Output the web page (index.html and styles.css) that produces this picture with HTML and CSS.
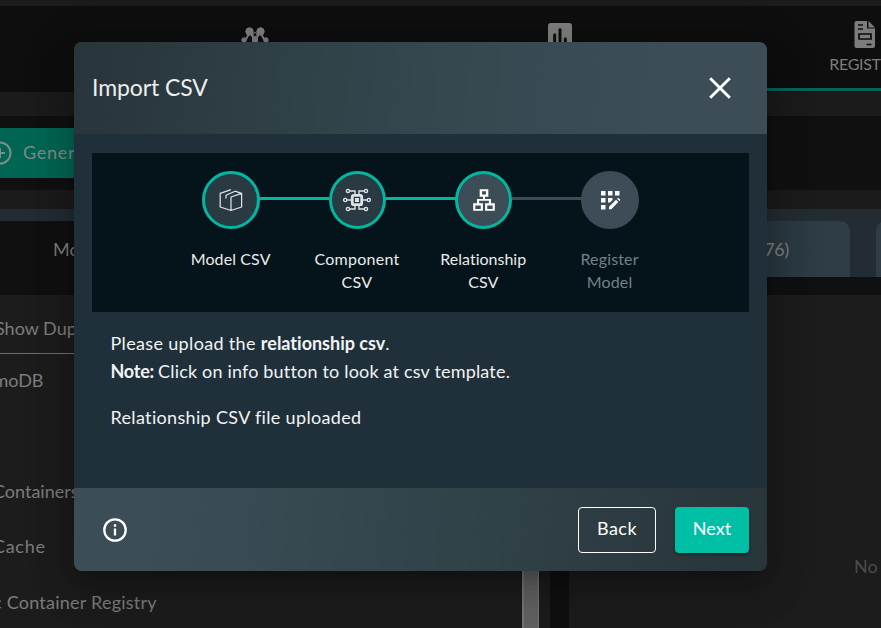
FILE: index.html
```html
<!DOCTYPE html>
<html lang="en">
<head>
<meta charset="utf-8">
<title>Import CSV</title>
<link rel="stylesheet" href="styles.css">
</head>
<body>
<div class="page">
  <nav class="nav">
    <div class="nav-item">
      <svg width="28" height="28" viewBox="0 0 28 28" fill="#7c7c7c" stroke="#7c7c7c"><path d="M9 5 14 8l5-3M9 5 4 14M19 5l5 9M9 5l5 9 5-9" fill="none" stroke-width="2"/><circle cx="8.500" cy="4.500" r="3.700"/><circle cx="19.500" cy="4.500" r="3.700"/><circle cx="14" cy="7.500" r="2" fill="#0d0d0d"/><circle cx="3" cy="13" r="2.200"/><circle cx="14" cy="13" r="2.700"/><circle cx="25" cy="13" r="2.200"/></svg>
    </div>
    <div class="nav-item">
      <svg width="32" height="32" viewBox="0 0 24 24" fill="#7c7c7c"><path d="M19 3H5a2 2 0 0 0-2 2v14c0 1.100.9 2 2 2h14a2 2 0 0 0 2-2V5a2 2 0 0 0-2-2z"/><path d="M8 12v5M12 8v9M16 15v2" stroke="#0d0d0d" stroke-width="2.200" stroke-linecap="round"/></svg>
    </div>
    <div class="nav-item active">
      <svg width="28" height="28" viewBox="0 0 28 28"><path d="M5.500 0H16v7.500h8V25a2 2 0 0 1-2 2H5.500a2 2 0 0 1-2-2V2a2 2 0 0 1 2-2z" fill="#7c7c7c"/><path d="M17.500 0 24 6.500h-6.500z" fill="#7c7c7c"/><path d="M7 4h5M7 8h5M15.500 23.500h5" stroke="#0d0d0d" stroke-width="1.700"/><path d="M8 13h12v5H8z" fill="none" stroke="#0d0d0d" stroke-width="1.700"/></svg>
      <span>REGISTRY</span>
    </div>
  </nav>
  <div class="toolbar">
    <div class="generate">
      <svg width="24" height="24" viewBox="0 0 24 24" fill="none" stroke="#7f8b87" stroke-width="2"><circle cx="12" cy="12" r="10.500"/><path d="M12 7v10M7 12h10"/></svg>
      <span>Generate</span>
    </div>
  </div>
  <div class="tabs">
    <div class="tab current">Models</div>
    <div class="tab wide">(7276)</div>
    <div class="tab next"></div>
  </div>
  <div class="panels">
    <div class="list">
      <div class="search">Show Duplicates</div>
      <div class="row"><span class="r1">amoDB</span></div>
      <div class="row"></div>
      <div class="row"><span class="r2">Containers</span></div>
      <div class="row"><span class="r3">Cache</span></div>
      <div class="row"><span class="r4">c Container Registry</span></div>
      <div class="scrollbar"></div>
    </div>
    <div class="detail">No model</div>
  </div>
</div>

<div class="modal">
  <header class="modal-head">
    <h1>Import CSV</h1>
    <svg width="22" height="22" viewBox="0 0 22 22" stroke="#fff" stroke-width="2.900"><path d="M1.200 1.200l19.600 19.600M20.800 1.200 1.200 20.800"/></svg>
  </header>
  <main class="modal-body">
    <div class="stepper">
      <div class="step done">
        <div class="disc"><svg width="28" height="28" viewBox="0 0 28 28" fill="none" stroke="#dfe3e5" stroke-width="1.250" stroke-linejoin="round"><path d="M14 3.600 3.200 7.300V21L14 24.500 24.600 21V7.300L18 5.200M24.600 7.300 14 11V24.500M9 12.500V9.300L18 5.200"/></svg></div>
        <p class="w1">Model CSV</p>
      </div>
      <div class="step done">
        <div class="disc"><svg width="28" height="28" viewBox="0 0 28 28" fill="none" stroke="#dfe3e5" stroke-width="1.400"><rect x="9.300" y="9.300" width="9.400" height="9.400" rx="1.500" stroke-width="2.800"/><rect x="12" y="12" width="4" height="4" fill="#dfe3e5" stroke="none"/><path d="M12 8V5H6.500M16 8V5h5.500M12 20v3H6.500M16 20v3h5.500M8 14H3.500M20 14h4.500"/><g fill="#2a3b44"><circle cx="5" cy="5" r="1.600"/><circle cx="23" cy="5" r="1.600"/><circle cx="5" cy="23" r="1.600"/><circle cx="23" cy="23" r="1.600"/><circle cx="2.200" cy="14" r="1.600"/><circle cx="25.800" cy="14" r="1.600"/></g></svg></div>
        <p class="w2">Component<br><span>CSV</span></p>
      </div>
      <div class="step current-step">
        <div class="disc"><svg width="26" height="26" viewBox="0 0 24 24" fill="#fff"><path d="M22 22h-9v-7h3.500v-2.200h-9V15H11v7H2v-7h3.500v-4h5.600V9H8V2h8v7h-3.100v2h5.600v4H22zM10.200 4v3h3.600V4zM4 17v3.200h5V17zM15 17v3.200h5V17z" fill-rule="evenodd"/></svg></div>
        <p class="w3">Relationship<br><span>CSV</span></p>
      </div>
      <div class="step pending">
        <div class="disc"><svg width="26" height="26" viewBox="0 0 26 26" fill="#fff"><path d="M4 4h4.500v4.500H4zM11 4h4.500v4.500H11zM18 4h4.500v4.500H18zM4 11h4.500v4.500H4zM11 11h4.500v2L13 15.500h-2zM4 18h4.500v4.500H4zM12 19.700l7-7 2.300 2.300-7 7.300H12zM20 11.700l1-1 2.500 2.300-1.200 1.100z"/></svg></div>
        <p class="w4">Register<br><span>Model</span></p>
      </div>
    </div>
    <div class="copy">
      <p><span class="c1">Please upload the </span><b class="c2">relationship csv</b>.</p>
      <p><b class="c3">Note: </b><span class="c4">Click on info button to look at csv template.</span></p>
      <p class="status">Relationship CSV file uploaded</p>
    </div>
  </main>
  <footer class="modal-foot">
    <svg width="26" height="26" viewBox="0 0 26 26" fill="none" stroke="#fff" stroke-width="2.300"><circle cx="13" cy="13" r="10.700"/><path d="M13 11.500v7M13 7.300v2.400"/></svg>
    <div class="actions">
      <button class="back">Back</button>
      <button class="go">Next</button>
    </div>
  </footer>
</div>
</body>
</html>
```
FILE: styles.css
```css
* { box-sizing: border-box; }
html, body { margin: 0; height: 628px; overflow: hidden; background: #1b1b1b; }
body { font-family: "Lato", "Liberation Sans", sans-serif; font-size: 18px; font-variant-ligatures: none; color: #7c7c7c; position: relative; }
h1, p { margin: 0; }
svg { display: block; flex: none; }
.page { width: 881px; height: 628px; padding-top: 6px; overflow: hidden; display: flex; flex-direction: column; background: #1b1b1b; }
.nav { height: 86px; flex: none; margin-bottom: 24px; padding-left: 102px; display: flex; background: #0e0e0e; }
.nav-item { width: 305px; flex: none; height: 85px; display: flex; flex-direction: column; align-items: center; padding-top: 21px; }
.nav-item:nth-child(2) { padding-top: 13px; }
.nav-item.active { padding-top: 15px; border-bottom: 3px solid #006554; }
.nav-item span { margin-top: 5px; font-size: 16px; line-height: 20px; letter-spacing: -.3px; }
.toolbar { height: 74px; flex: none; margin-bottom: 19px; padding: 12px 0; background: #101010; }
.generate { width: 200px; height: 50px; margin-left: -10px; display: flex; align-items: center; gap: 11px; background: #006553; color: #7f8b87; letter-spacing: .7px; }
.generate svg { margin-left: -2px; }
.generate span { margin-bottom: 2px; }
.tabs { height: 68px; flex: none; display: flex; align-items: flex-end; background: #222c32; }
.tab { height: 56px; flex: none; display: flex; align-items: center; background: linear-gradient(90deg, #26343b 75%, #2e3d46 95%); }
.tab.current { width: 400px; padding: 0 0 0 53px; background: #101010; }
.tab.wide { width: 450px; justify-content: flex-end; padding-right: 61px; border-radius: 0 10px 0 0; letter-spacing: -.3px; }
.tab.next { width: 100px; margin-left: 26px; border-radius: 10px 0 0 0; background: #2e3d46; }
.panels { flex: 1; padding-top: 18px; display: flex; background: #101010; }
.list { width: 550px; height: 333px; flex: none; position: relative; background: #1c1c1c; overflow: hidden; }
.search { height: 59px; line-height: 66px; margin-left: -5px; border-bottom: 1px solid #6d6d6d; }
.row { height: 55.500px; line-height: 53.500px; white-space: nowrap; }
.row span { display: block; }
.r1 { margin-left: -15.500px; }
.r2 { margin-left: -7px; }
.r3 { margin-left: -7px; letter-spacing: .7px; position: relative; top: -1px; }
.r4 { margin-left: -7px; letter-spacing: .23px; }
.scrollbar { position: absolute; left: 522px; top: 0; width: 17px; height: 333px; background: #626262; border: solid #757575; border-width: 0 1px 0 2px; }
.detail { flex: none; width: 312px; margin-left: 19px; padding: 260px 0 0 285px; line-height: 22px; white-space: nowrap; color: #4b4b4b; background: #1c1c1c; }

.modal { position: absolute; left: 74px; top: 42px; width: 693px; height: 529px; display: flex; flex-direction: column; border-radius: 8px; overflow: hidden; color: #fff; background: #20303a; box-shadow: 0 11px 15px -7px rgba(0,0,0,.2), 0 24px 38px 3px rgba(0,0,0,.14), 0 9px 46px 8px rgba(0,0,0,.12); }
.modal-head { height: 92px; flex: none; padding: 0 36px 0 18px; display: flex; align-items: center; justify-content: space-between; background: linear-gradient(96deg, #28353a, #34474e 50%, #3c4d58 85%); }
.modal-head h1 { font-size: 23px; font-weight: 400; letter-spacing: -.1px; line-height: 30px; margin-bottom: 3px; color: #eceeef; }
.modal-body { flex: 1; padding: 19px 18px 0; background: #20303a; }
.stepper { height: 159px; padding: 18px 0 0 76px; display: flex; background: #05141a; }
.step { width: 126.300px; flex: none; text-align: center; position: relative; }
.step:not(:first-child)::before { content: ""; position: absolute; top: 26px; left: -35px; width: 70px; height: 3px; background: #00b8a0; }
.step.pending:not(:first-child)::before { background: #3c4d57; }
.disc { width: 58px; height: 58px; margin: 0 auto; position: relative; display: flex; align-items: center; justify-content: center; border-radius: 50%; border: 3px solid #00b8a0; background: #293a43; }
.step:nth-child(2) .disc, .step:nth-child(3) .disc { width: 57px; }
.current-step .disc { background: #3c4d57; }
.pending .disc { border-color: #3c4d57; background: #3c4d57; }
.step p { margin-top: 18px; font-size: 16px; line-height: 23px; color: #e9ebec; white-space: nowrap; }
.step .w1 { letter-spacing: .1px; }
.step .w2 { letter-spacing: .25px; }
.step .w4 { letter-spacing: .15px; color: #748087; }
.step p { margin-left: -1px; }
.copy { padding: 17px 18.500px 0; line-height: 28px; white-space: nowrap; color: #f1f3f4; }
.c1 { letter-spacing: .34px; }
.c2 { letter-spacing: 0; }
.c3 { letter-spacing: -.25px; }
.c4 { letter-spacing: .18px; }
.status { margin-top: 18px; letter-spacing: .33px; }
.modal-foot { height: 83px; flex: none; padding: 0 18px 0 28px; display: flex; align-items: center; justify-content: space-between; background: linear-gradient(96deg, #3c4d58 10%, #34474e 40%, #28353a); }
.actions { display: flex; gap: 19px; }
button { height: 46px; padding: 0 0 4px; border: 0; border-radius: 4px; font: inherit; color: #fff; }
.back { width: 78px; border: 1px solid #fff; background: transparent; letter-spacing: .5px; }
.go { width: 74px; background: #00bfa5; box-shadow: 0 2px 3px rgba(0,0,0,.3); }
```
